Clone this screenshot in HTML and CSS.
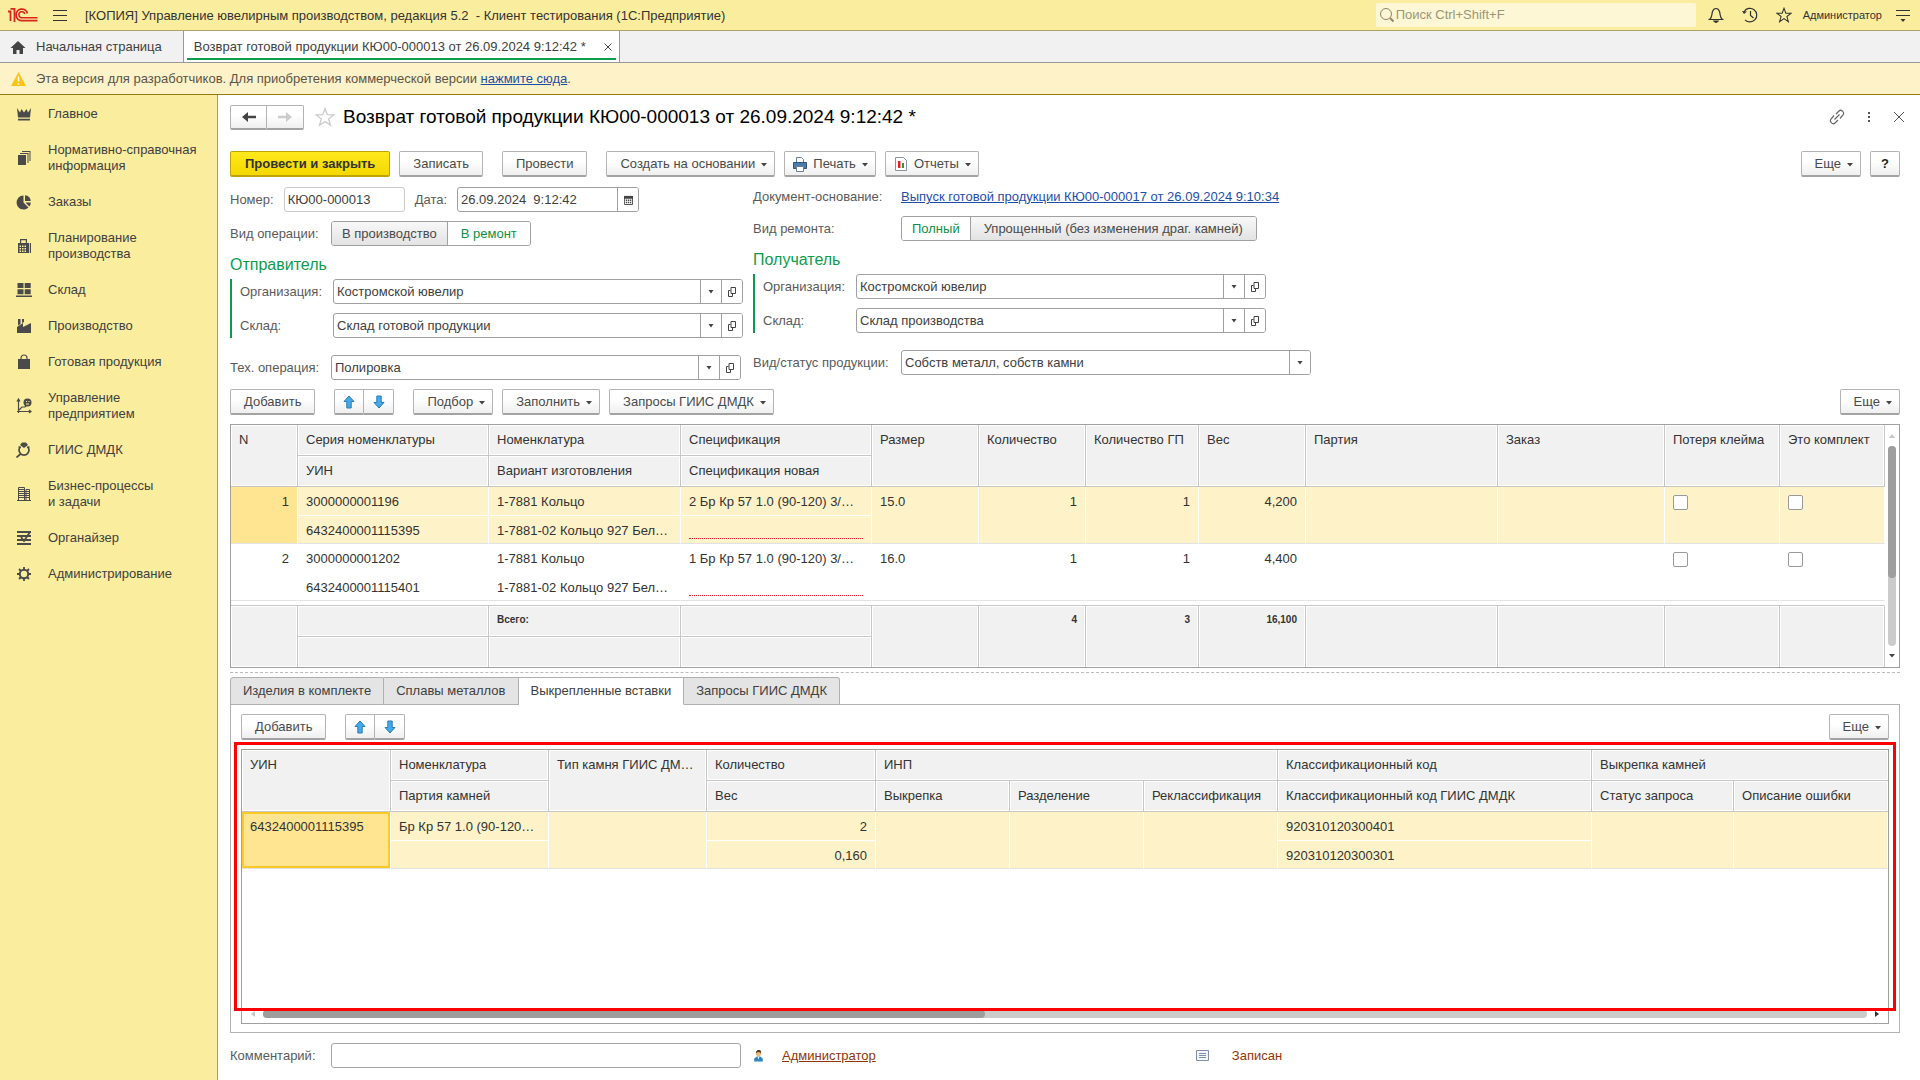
FILE: index.html
```html
<!DOCTYPE html>
<html lang="ru">
<head>
<meta charset="utf-8">
<meta name="viewport" content="width=device-width, initial-scale=1">
<title>Возврат готовой продукции КЮ00-000013</title>
<link rel="stylesheet" href="styles.css">
</head>
<body>
<svg class="sprite" aria-hidden="true">
  <symbol id="i-caret" viewBox="0 0 6 4"><path d="M0 0h6L3 3.500z" fill="#444"/></symbol>
  <symbol id="i-pick" viewBox="0 0 6 4"><path d="M.500 0h5L3 3.500z" fill="#444"/></symbol>
  <symbol id="i-open" viewBox="0 0 10 12"><path d="M4 1.500h4.500v6H4zM3.500 4.500h-2v6h4V8" fill="none" stroke="#444"/></symbol>
  <symbol id="i-up" viewBox="0 0 12 14"><path d="M6 1l5 5.500H8.200V13H3.800V6.500H1z" fill="#43aaec" stroke="#2a7cb5"/></symbol>
  <symbol id="i-down" viewBox="0 0 12 14"><path d="M6 13l5-5.500H8.200V1H3.800v6.500H1z" fill="#43aaec" stroke="#2a7cb5"/></symbol>
  <symbol id="i-star" viewBox="0 0 20 20"><path d="M10 1.500l2.300 6.200 6.400.200-5.100 4 1.900 6.400-5.500-3.700-5.500 3.700 1.900-6.400-5.100-4 6.400-.200z" fill="none" stroke="currentColor" stroke-width="1.300"/></symbol>
</svg>

<header class="topbar">
  <svg class="logo" width="30" height="16" viewBox="0 0 30 16" fill="none" stroke="#d9261c"><path d="M0 4.500h2.500V14M2.500 1.800h4V15" stroke-width="1.800"/><path d="M19.500 6.500A5.800 5.800 0 1 0 14 13.700h15.500" stroke-width="1.800"/><path d="M16.800 7A3 3 0 1 0 14 10.700h15.500" stroke-width="1.500"/></svg>
  <button class="bare" aria-label="Меню"><svg width="14" height="14" viewBox="0 0 14 14" stroke="#333"><path d="M0 2.500h14M0 7.500h14M0 12.500h14"/></svg></button>
  <span class="app-title">[КОПИЯ] Управление ювелирным производством, редакция 5.2 &nbsp;- Клиент тестирования (1С:Предприятие)</span>
  <label class="search"><svg width="16" height="16" viewBox="0 0 16 16" fill="none" stroke="#8d8868"><circle cx="7" cy="7" r="5.500"/><path d="M11 11l3.500 3.500" stroke-width="2"/></svg><input type="text" placeholder="Поиск Ctrl+Shift+F" aria-label="Поиск"></label>
  <div class="top-icons">
    <button class="bare" aria-label="Уведомления"><svg width="16" height="16" viewBox="0 0 16 16" fill="none" stroke="#333"><path d="M1.500 12.500c3-2 2-5 3-8C5 3 6 1.500 8 1.500S11 3 11.500 4.500c1 3 0 6 3 8z" stroke-width="1.200"/><path d="M5.500 14h5l-2 1.500h-1z" fill="#333"/></svg></button>
    <button class="bare" aria-label="История"><svg width="16" height="16" viewBox="0 0 16 16" fill="none" stroke="#333" stroke-width="1.200"><path d="M2.200 4.500A6.800 6.800 0 1 1 3 12.800M8.500 4v4.500l3 2.500"/><path d="M0 4l5 .500L2 7z" fill="#333" stroke="none"/></svg></button>
    <button class="bare" aria-label="Избранное"><svg width="16" height="16"><use href="#i-star"/></svg></button>
  </div>
  <button class="bare user">Администратор</button>
  <button class="bare" aria-label="Сервис"><svg width="14" height="14" viewBox="0 0 14 14" stroke="#333"><path d="M0 2.500h14M0 7.500h14" stroke-width="1.200"/><path d="M4.500 11h5L7 14z" fill="#333" stroke="none"/></svg></button>
</header>

<nav class="tabs" aria-label="Открытые окна">
  <a class="tab home" href="#home"><svg width="16" height="14" viewBox="0 0 16 14"><path d="M8 1l7.500 7H13v6H9.500v-4h-3v4H3V8H.500z" fill="#444"/></svg>Начальная страница</a>
  <div class="tab active"><a href="#doc">Возврат готовой продукции КЮ00-000013 от 26.09.2024 9:12:42 *</a><button class="bare" aria-label="Закрыть вкладку"><svg width="8" height="8" viewBox="0 0 8 8" stroke="#444"><path d="M.500.500l7 7M7.500.500l-7 7"/></svg></button></div>
</nav>

<div class="notice">
  <svg width="15" height="14" viewBox="0 0 15 14"><path d="M7.500 0L15 14H0z" fill="#fcc314"/><path d="M7.500 4.500v5M7.500 11v1.500" stroke="#fff" stroke-width="1.600"/></svg>
  <span>Эта версия для разработчиков. Для приобретения коммерческой версии <a href="#buy">нажмите сюда</a>.</span>
</div>

<div class="body">
<nav class="sidebar" aria-label="Разделы">
  <a href="#1"><svg width="16" height="16" viewBox="0 0 16 16"><path d="M1 2l3 4.500L5.500 3 8 6.500 10.500 3 12 6.500 15 2l-1 9.500H2zM2 12.700h12v1.800H2z"/></svg>Главное</a>
  <a href="#2"><svg width="16" height="16" viewBox="0 0 16 16"><path d="M2 5h8v10H2zM4 3h8.500v10h-1V4H4zM6 1h8.500v10h-1V2H6z"/></svg>Нормативно-справочная информация</a>
  <a href="#3"><svg width="16" height="16" viewBox="0 0 16 16"><path d="M7.500 1.500v7l5 5A7 7 0 1 1 7.500 1.500z"/><path d="M9 1.200A6.500 6.500 0 0 1 14.800 7H9zM9.500 8.500h5.300a6 6 0 0 1-1.500 4z"/></svg>Заказы</a>
  <a href="#4"><svg width="16" height="16" viewBox="0 0 16 16"><path fill-rule="evenodd" d="M4 1h7v4h2v10H2V5h2zM5.200 2.200V5h4.600V2.200zM3.500 7.500v1.500h1.500V7.500zm2.500 0v1.500h1.500V7.500zm2.500 0v1.500H10V7.500zM3.500 10v1.500h1.500V10zM6 10v1.500h1.500V10zm2.500 0v1.500H10V10zm-5 2.500V14h1.500v-1.500zm2.500 0V14h1.500v-1.500zm2.500 0V14H10v-1.500zM13.800 5H15v10h-1.200z"/></svg>Планирование производства</a>
  <a href="#5"><svg width="16" height="16" viewBox="0 0 16 16"><path d="M1.500 1h6v5h-6zM8.700 1h6v5h-6zM1.500 7.200h6v5h-6zM8.700 7.200h6v5h-6zM0 13.500h16V15H0z"/></svg>Склад</a>
  <a href="#6"><svg width="16" height="16" viewBox="0 0 16 16"><path d="M1 15V9l6-4v4l8-4v10zM2 1h2.500v5L2 7.500zM6 1h2v3L6 5z"/></svg>Производство</a>
  <a href="#7"><svg width="16" height="16" viewBox="0 0 16 16"><path d="M2 5h12v10H2z"/><path d="M5 7V4a3 3 0 0 1 6 0v3" fill="none" stroke="#4a4a4a" stroke-width="1.200"/></svg>Готовая продукция</a>
  <a href="#8"><svg width="16" height="16" viewBox="0 0 16 16"><path d="M2.500 1v14M1 13.500h14M1 3.500L2.500 1 4 3.500M13 12l2 1.500L13 15M3 12l3-3h3l2-2" fill="none" stroke="#4a4a4a" stroke-width="1.200"/><circle cx="11.500" cy="4.500" r="4"/><path d="M10 3.500h1M12.500 3.500h1M10 6h3" stroke="#fbed9e"/></svg>Управление предприятием</a>
  <a href="#9"><svg width="16" height="16" viewBox="0 0 16 16"><path d="M6 .500h4L12 3 8 6 4 3z"/><path d="M4.500 4.500a5 5 0 1 0 7 0M2.500 5l2.500.500M13.500 5l-2.500.500M4.500 12L.500 15.500" fill="none" stroke="#4a4a4a" stroke-width="1.700"/></svg>ГИИС ДМДК</a>
  <a href="#10"><svg width="16" height="16" viewBox="0 0 16 16"><path d="M2.500 1.500h6v13h-6zM10 3.500h3.500v11H10zM2.500 3.500h6M2.500 5.500h11M2.500 7.500h11M2.500 9.500h11M2.500 11.500h11M1 14.500h14" fill="none" stroke="#4a4a4a"/></svg>Бизнес-процессы<br>и задачи</a>
  <a href="#11"><svg width="16" height="16" viewBox="0 0 16 16"><path d="M1 2h14M1 6h14M1 10h14M1 14h14M5 7l3 4 6-9" fill="none" stroke="#4a4a4a" stroke-width="1.800"/></svg>Органайзер</a>
  <a href="#12"><svg width="16" height="16" viewBox="0 0 16 16"><g fill="none" stroke="#4a4a4a"><circle cx="8" cy="8" r="4.200" stroke-width="2"/><path d="M8 1v2.500M8 12.500V15M1 8h2.500M12.500 8H15M3 3l2 2M11 11l2 2M13 3l-2 2M5 11l-2 2" stroke-width="1.800"/></g></svg>Администрирование</a>
</nav>

<main class="main">
  <div class="title-row">
    <div class="joined"><button class="btn nav" aria-label="Назад"><svg width="14" height="12" viewBox="0 0 14 12"><path d="M0 6l6-5v3.700h8v2.600H6V11z" fill="#444"/></svg></button><button class="btn nav" aria-label="Вперед"><svg width="14" height="12" viewBox="0 0 14 12"><path d="M14 6L8 1v3.700H0v2.600h8V11z" fill="#ccc"/></svg></button></div>
    <button class="bare fav" aria-label="В избранное"><svg width="20" height="20"><use href="#i-star"/></svg></button>
    <h1>Возврат готовой продукции КЮ00-000013 от 26.09.2024 9:12:42 *</h1>
    <div class="win-icons">
      <button class="bare" aria-label="Ссылка"><svg width="16" height="16" viewBox="0 0 16 16" fill="none" stroke="#666" stroke-width="1.200"><path d="M7 5l3-3c2-2 6 1 4 4l-3 3.500M9 11l-3 3c-2 2-6-1-4-4l3-3.500M5.500 10.500l5-5"/></svg></button>
      <button class="bare" aria-label="Действия"><svg width="4" height="16" viewBox="0 0 4 16" fill="#555"><path d="M1 3h2v2H1zM1 7h2v2H1zM1 11h2v2H1z"/></svg></button>
      <button class="bare" aria-label="Закрыть"><svg width="12" height="12" viewBox="0 0 12 12" stroke="#555"><path d="M1 1l10 10M11 1L1 11"/></svg></button>
    </div>
  </div>

  <div class="commands">
    <button class="btn primary">Провести и закрыть</button>
    <button class="btn">Записать</button>
    <button class="btn apart">Провести</button>
    <button class="btn apart menu">Создать на основании<svg width="6" height="4"><use href="#i-caret"/></svg></button>
    <button class="btn menu pic"><svg width="14" height="16" viewBox="0 0 14 16"><path d="M3.500 7V1.500h5l2 2V7" fill="#fff" stroke="#6b7f93"/><path d="M.500 6.500h13v6H.500z" fill="#4d7ba8" stroke="#2f567d"/><path d="M3.500 10.500h7v5h-7z" fill="#fff" stroke="#6b7f93"/></svg>Печать<svg width="6" height="4"><use href="#i-caret"/></svg></button>
    <button class="btn menu pic"><svg width="14" height="16" viewBox="0 0 14 16"><path d="M1.500 1.500h8l3 3v10h-11z" fill="#fff" stroke="#8a93a0"/><path d="M4 5h2.500v7H4z" fill="#e22"/><path d="M8 7h2v5H8z" fill="#2a9a3a"/></svg>Отчеты<svg width="6" height="4"><use href="#i-caret"/></svg></button>
    <button class="btn menu push">Еще<svg width="6" height="4"><use href="#i-caret"/></svg></button>
    <button class="btn help">?</button>
  </div>

  <div class="form">
    <div class="form-col left">
      <div class="row">
        <label for="num">Номер:</label><input class="box number" id="num" value="КЮ00-000013" readonly>
        <label class="date-label" for="date">Дата:</label><div class="field date"><input id="date" value="26.09.2024  9:12:42"><button aria-label="Календарь"><svg width="9" height="10" viewBox="0 0 10 11"><path d="M.500 1.500h9v9h-9z" fill="none" stroke="#444"/><path d="M0 1h10v3H0zM2 5h1.500v1.500H2zM4.300 5h1.500v1.500H4.300zM6.600 5h1.500v1.500H6.600zM2 7.500h1.500V9H2zM4.300 7.500h1.500V9H4.300zM6.600 7.500h1.500V9H6.600z" fill="#444"/></svg></button></div>
      </div>
      <div class="row"><span class="lbl">Вид операции:</span><div class="toggle"><button>В производство</button><button class="on" aria-pressed="true">В ремонт</button></div></div>
      <h2>Отправитель</h2>
      <div class="group">
        <div class="row"><label for="o1">Организация:</label><div class="field"><input id="o1" value="Костромской ювелир"><button aria-label="Выбрать"><svg width="6" height="4"><use href="#i-pick"/></svg></button><button aria-label="Открыть"><svg width="10" height="12"><use href="#i-open"/></svg></button></div></div>
        <div class="row"><label for="s1">Склад:</label><div class="field"><input id="s1" value="Склад готовой продукции"><button aria-label="Выбрать"><svg width="6" height="4"><use href="#i-pick"/></svg></button><button aria-label="Открыть"><svg width="10" height="12"><use href="#i-open"/></svg></button></div></div>
      </div>
      <div class="row last"><label class="lbl" for="tech">Тех. операция:</label><div class="field"><input id="tech" value="Полировка"><button aria-label="Выбрать"><svg width="6" height="4"><use href="#i-pick"/></svg></button><button aria-label="Открыть"><svg width="10" height="12"><use href="#i-open"/></svg></button></div></div>
    </div>
    <div class="form-col right">
      <div class="row short"><span class="lbl">Документ-основание:</span><a href="#base">Выпуск готовой продукции КЮ00-000017 от 26.09.2024 9:10:34</a></div>
      <div class="row"><span class="lbl">Вид ремонта:</span><div class="toggle"><button class="on" aria-pressed="true">Полный</button><button>Упрощенный (без изменения драг. камней)</button></div></div>
      <h2>Получатель</h2>
      <div class="group">
        <div class="row"><label for="o2">Организация:</label><div class="field"><input id="o2" value="Костромской ювелир"><button aria-label="Выбрать"><svg width="6" height="4"><use href="#i-pick"/></svg></button><button aria-label="Открыть"><svg width="10" height="12"><use href="#i-open"/></svg></button></div></div>
        <div class="row"><label for="s2">Склад:</label><div class="field"><input id="s2" value="Склад производства"><button aria-label="Выбрать"><svg width="6" height="4"><use href="#i-pick"/></svg></button><button aria-label="Открыть"><svg width="10" height="12"><use href="#i-open"/></svg></button></div></div>
      </div>
      <div class="row last"><label class="lbl" for="kind">Вид/статус продукции:</label><div class="field"><select id="kind"><option>Собств металл, собств камни</option></select><span class="drop"><svg width="6" height="4"><use href="#i-pick"/></svg></span></div></div>
    </div>
  </div>

  <div class="commands">
    <button class="btn">Добавить</button>
    <div class="joined apart"><button class="btn arrow" aria-label="Вверх"><svg width="12" height="14"><use href="#i-up"/></svg></button><button class="btn arrow" aria-label="Вниз"><svg width="12" height="14"><use href="#i-down"/></svg></button></div>
    <button class="btn apart menu">Подбор<svg width="6" height="4"><use href="#i-caret"/></svg></button>
    <button class="btn menu">Заполнить<svg width="6" height="4"><use href="#i-caret"/></svg></button>
    <button class="btn menu">Запросы ГИИС ДМДК<svg width="6" height="4"><use href="#i-caret"/></svg></button>
    <button class="btn menu push">Еще<svg width="6" height="4"><use href="#i-caret"/></svg></button>
  </div>

  <div class="grid items">
    <table>
      <colgroup><col class="w67"><col class="w191"><col class="w192"><col class="w191"><col class="w107"><col class="w107"><col class="w113"><col class="w107"><col><col class="w167"><col class="w115"><col class="w105"></colgroup>
      <thead>
        <tr><th rowspan="2">N</th><th>Серия номенклатуры</th><th>Номенклатура</th><th>Спецификация</th><th rowspan="2">Размер</th><th rowspan="2">Количество</th><th rowspan="2">Количество ГП</th><th rowspan="2">Вес</th><th rowspan="2">Партия</th><th rowspan="2">Заказ</th><th rowspan="2">Потеря клейма</th><th rowspan="2">Это комплект</th></tr>
        <tr><th>УИН</th><th>Вариант изготовления</th><th>Спецификация новая</th></tr>
      </thead>
      <tbody>
        <tr class="sel"><td rowspan="2" class="num cur end">1</td><td>3000000001196</td><td>1-7881 Кольцо</td><td>2 Бр Кр 57 1.0 (90-120) 3/…</td><td rowspan="2" class="end">15.0</td><td rowspan="2" class="num end">1</td><td rowspan="2" class="num end">1</td><td rowspan="2" class="num end">4,200</td><td rowspan="2" class="end"></td><td rowspan="2" class="end"></td><td rowspan="2" class="end"><input type="checkbox" aria-label="Потеря клейма, строка 1"></td><td rowspan="2" class="end"><input type="checkbox" aria-label="Это комплект, строка 1"></td></tr>
        <tr class="sel second"><td>6432400001115395</td><td>1-7881-02 Кольцо 927 Бел…</td><td><span class="required"></span></td></tr>
        <tr><td rowspan="2" class="num end">2</td><td>3000000001202</td><td>1-7881 Кольцо</td><td>1 Бр Кр 57 1.0 (90-120) 3/…</td><td rowspan="2" class="end">16.0</td><td rowspan="2" class="num end">1</td><td rowspan="2" class="num end">1</td><td rowspan="2" class="num end">4,400</td><td rowspan="2" class="end"></td><td rowspan="2" class="end"></td><td rowspan="2" class="end"><input type="checkbox" aria-label="Потеря клейма, строка 2"></td><td rowspan="2" class="end"><input type="checkbox" aria-label="Это комплект, строка 2"></td></tr>
        <tr class="second"><td>6432400001115401</td><td>1-7881-02 Кольцо 927 Бел…</td><td><span class="required"></span></td></tr>
      </tbody>
      <tbody class="gap"><tr><td colspan="12"></td></tr></tbody>
      <tfoot>
        <tr><td rowspan="2"></td><td></td><td>Всего:</td><td></td><td rowspan="2"></td><td rowspan="2" class="num">4</td><td rowspan="2" class="num">3</td><td rowspan="2" class="num">16,100</td><td rowspan="2"></td><td rowspan="2"></td><td rowspan="2"></td><td rowspan="2"></td></tr>
        <tr><td></td><td></td><td></td></tr>
      </tfoot>
    </table>
    <div class="vscroll"><svg width="6" height="4" viewBox="0 0 6 4"><path d="M0 4h6L3 0z" fill="#c4c4c4"/></svg><div class="track"><div class="thumb"></div></div><svg width="6" height="4"><use href="#i-caret"/></svg></div>
  </div>

  <div class="splitter"></div>

  <div class="subtabs" role="tablist">
    <button role="tab">Изделия в комплекте</button><button role="tab">Сплавы металлов</button><button role="tab" class="on" aria-selected="true">Выкрепленные вставки</button><button role="tab">Запросы ГИИС ДМДК</button>
  </div>
  <section class="panel">
    <div class="commands">
      <button class="btn">Добавить</button>
      <div class="joined apart"><button class="btn arrow" aria-label="Вверх"><svg width="12" height="14"><use href="#i-up"/></svg></button><button class="btn arrow" aria-label="Вниз"><svg width="12" height="14"><use href="#i-down"/></svg></button></div>
      <button class="btn menu push">Еще<svg width="6" height="4"><use href="#i-caret"/></svg></button>
    </div>
    <div class="grid stones">
      <table>
        <colgroup><col class="w149"><col class="w158"><col class="w158"><col class="w169"><col class="w134"><col class="w134"><col class="w134"><col class="w314"><col class="w142"><col></colgroup>
        <thead>
          <tr><th rowspan="2">УИН</th><th>Номенклатура</th><th rowspan="2">Тип камня ГИИС ДМ…</th><th>Количество</th><th colspan="3">ИНП</th><th>Классификационный код</th><th colspan="2">Выкрепка камней</th></tr>
          <tr><th>Партия камней</th><th>Вес</th><th>Выкрепка</th><th>Разделение</th><th>Реклассификация</th><th>Классификационный код ГИИС ДМДК</th><th>Статус запроса</th><th>Описание ошибки</th></tr>
        </thead>
        <tbody>
          <tr class="sel"><td rowspan="2" class="cur focus end">6432400001115395</td><td>Бр Кр 57 1.0 (90-120…</td><td rowspan="2" class="end"></td><td class="num">2</td><td rowspan="2" class="end"></td><td rowspan="2" class="end"></td><td rowspan="2" class="end"></td><td>920310120300401</td><td rowspan="2" class="end"></td><td rowspan="2" class="end"></td></tr>
          <tr class="sel second"><td></td><td class="num">0,160</td><td>920310120300301</td></tr>
        </tbody>
      </table>
      <div class="hscroll"><svg width="4" height="6" viewBox="0 0 4 6"><path d="M4 0v6L0 3z" fill="#c4c4c4"/></svg><div class="track"><div class="thumb"></div></div><svg width="4" height="6" viewBox="0 0 4 6"><path d="M0 0v6l4-3z" fill="#333"/></svg></div>
      <div class="callout"></div>
    </div>
  </section>

  <div class="status">
    <label class="lbl" for="comment">Комментарий:</label><input class="box comment" id="comment">
    <svg width="9" height="12" viewBox="0 0 10 14"><path d="M0 13.500V10l3-2.500h4L10 10v3.500z" fill="#2f86c0"/><circle cx="5" cy="4" r="3" fill="#f2b876"/><path d="M2 4V2l2-2h3l1 2v2L6.500 2.500h-3z" fill="#5a4020"/><path d="M4 8h2l-1 3z" fill="#fff"/></svg>
    <a class="author" href="#author">Администратор</a>
    <svg class="doc" width="13" height="11" viewBox="0 0 13 11"><path d="M.500.500h12v10H.500z" fill="#f4f7fa" stroke="#8090a8"/><path d="M3 3.500h7M3 5.500h7M3 7.500h7" stroke="#8090a8"/></svg>
    <span class="state">Записан</span>
  </div>
</main>
</div>
</body>
</html>
```
FILE: styles.css
```css
* { box-sizing: border-box; }
body {
  margin: 0;
  min-height: 100vh;
  display: flex;
  flex-direction: column;
  background: #fff;
  color: #404040;
  font: 13px/16px "Liberation Sans", Arial, sans-serif;
}
button, input, select { font: inherit; color: inherit; margin: 0; }
button { cursor: pointer; white-space: nowrap; }
svg { display: block; flex: none; }
a { color: #1d4fa8; }
.sprite { position: absolute; width: 0; height: 0; }
.bare { border: 0; background: none; padding: 0; }

/* window header */
.topbar {
  display: flex;
  align-items: center;
  height: 31px;
  padding: 0 10px 0 8px;
  background: #fbed9e;
  border-bottom: 1px solid #aca36a;
  color: #333;
}
.logo { margin-right: 15px; }
.app-title { margin-left: 18px; padding-top: 1px; white-space: nowrap; }
.search {
  display: flex;
  align-items: center;
  width: 320px;
  height: 24px;
  margin-left: auto;
  padding: 0 3px;
  background: #fdf7d6;
  border-radius: 2px;
}
.search input { flex: 1; min-width: 0; padding: 0 0 1px 1px; border: 0; background: none; outline: 0; }
.search input::placeholder { color: #9a9678; opacity: 1; }
.top-icons { display: flex; gap: 18px; margin: 0 11px 0 12px; }
.user { margin-right: 14px; font-size: 11px; color: #333; }

.tabs { display: flex; height: 32px; background: #f1f1f1; border-bottom: 1px solid #999; }
.tab { display: flex; align-items: center; color: #404040; text-decoration: none; border-right: 1px solid #999; white-space: nowrap; }
.tab a { color: inherit; text-decoration: none; }
.home { gap: 10px; padding: 0 21px 0 10px; }
.active { position: relative; gap: 18px; padding: 0 7px 0 10px; background: #fff; }
.active::after { content: ""; position: absolute; left: 3px; right: 3px; bottom: 2px; height: 2px; background: #0d9b4e; }

.notice { display: flex; align-items: center; gap: 10px; height: 32px; padding: 0 11px; background: #fef2c8; border-bottom: 1px solid #967b12; color: #5a5548; }

.body { flex: 1; display: flex; }

.sidebar { width: 218px; flex: none; padding-top: 1px; background: #fbed9e; border-right: 1px solid #a09c78; }
.sidebar a { display: flex; align-items: center; gap: 16px; padding: 10px 12px 10px 16px; color: #404040; text-decoration: none; }
.sidebar svg { fill: #4a4a4a; }

.main { flex: 1; min-width: 0; display: flex; flex-direction: column; padding: 10px 20px 12px 12px; }

.title-row { display: flex; align-items: center; height: 24px; margin-bottom: 22px; }
.fav { margin: 0 8px 0 11px; color: #ccc; }
h1 { margin: 0; font-size: 19px; line-height: 24px; font-weight: 400; color: #000; }
.win-icons { display: flex; align-items: center; gap: 22px; margin: 0 -5px 0 auto; }

/* command bars */
.commands { display: flex; gap: 9px; }
.btn {
  display: flex;
  align-items: center;
  justify-content: center;
  height: 26px;
  padding: 1px 13px 0;
  border: 1px solid #b3b3b3;
  border-bottom: 2px solid #a3a3a3;
  border-radius: 2px;
  background: linear-gradient(#fff 40%, #efefef);
  color: #4a4a4a;
}
.primary { padding: 1px 14px 0; background: linear-gradient(#ffe81c, #f5d800); border-color: #bfa50a; color: #333; font-weight: 700; }
.menu { gap: 6px; padding: 1px 7px 0 13px; }
.menu svg:last-child { position: relative; top: 1px; }
.pic { padding-left: 8px; }
.apart { margin-left: 10px; }
.push { margin-left: auto; }
.help { width: 30px; padding: 1px 0 0; font-weight: 700; color: #222; }
.joined { display: flex; }
.joined .btn:first-child { border-radius: 2px 0 0 2px; }
.joined .btn:last-child { border-left: 0; border-radius: 0 2px 2px 0; }
.nav { width: 37px; height: 25px; padding: 0; }
.arrow { width: 30px; padding: 0; }

/* document header form */
.form { display: flex; margin: 10px 0 9px; color: #5a5a5a; }
.form-col { display: flex; flex-direction: column; gap: 9px; }
.left { width: 523px; flex: none; }
.right { flex: 1; }
.row { display: flex; align-items: center; height: 25px; }
.short { height: 20px; }
.row.last { margin-top: 8px; }
.left .lbl { width: 101px; }
.right .lbl { width: 148px; }
.box { height: 25px; padding: 0 3px; border: 1px solid #a6a6a6; border-radius: 3px; background: #fff; color: #404040; }
.number { width: 121px; margin-left: 10px; border-color: #ccc; }
.date-label { margin: 0 10px 0 10px; }
.field { position: relative; display: flex; width: 410px; height: 25px; border: 1px solid #a0a0a0; border-radius: 3px; background: #fff; overflow: hidden; }
.field input, .field select { flex: 1; min-width: 0; padding: 0 3px; border: 0; background: none; outline: 0; color: #404040; white-space: pre; }
.field select { appearance: none; }
.field button, .drop { display: flex; align-items: center; justify-content: center; width: 21px; padding: 0; border: 0; border-left: 1px solid #a0a0a0; background: #fff; }
.drop { position: absolute; right: 0; top: 0; bottom: 0; pointer-events: none; }
.date { width: 182px; }
h2 { margin: 0 0 -5px; font-size: 16px; line-height: 20px; font-weight: 400; color: #0d9b4e; }
.group { display: flex; flex-direction: column; gap: 9px; padding-left: 8px; border-left: 2px solid #0d9b4e; }
.group label { width: 93px; }
.toggle { display: flex; height: 25px; border: 1px solid #a0a0a0; border-radius: 3px; overflow: hidden; }
.toggle button { padding: 0 10px; border: 0; background: linear-gradient(#f8f8f8, #e3e3e3); color: #4a4a4a; }
.toggle button + button { border-left: 1px solid #a0a0a0; padding: 0 13px; }
.toggle .on, .toggle button + .on { background: #fff; color: #0d8f47; }

/* data grids */
.grid { position: relative; display: flex; border: 1px solid #a0a0a0; background: #fff; color: #333; }
.items { margin-top: 9px; }
table { width: 100%; table-layout: fixed; border-collapse: separate; border-spacing: 0; }
th, td { height: 31px; padding: 7px 8px 0; text-align: left; vertical-align: top; font-weight: 400; white-space: nowrap; overflow: hidden; }
th, tfoot td { background: #f1f1f1; border-right: 1px solid #c6c6c6; border-bottom: 1px solid #c6c6c6; box-shadow: inset 0 0 0 1px #fff; }
tbody td { height: 29px; border-right: 1px solid #fff; border-bottom: 1px solid #fff; }
tbody .second td { height: 28px; }
tbody .second td, tbody .end { border-bottom-color: #e2e2e2; }
.sel td { background: #fef2c8; }
.sel .cur { background: #ffe591; }
.sel .focus { box-shadow: inset 0 0 0 2px #fbc926; }
.gap td { height: 5px; padding: 0; border-bottom-color: #c6c6c6; }
tfoot td { padding-top: 6px; font-size: 10px; font-weight: 700; }
tfoot tr:last-child td { height: 30px; }
tfoot tr:last-child td, tfoot td[rowspan] { border-bottom: 0; }
.num { text-align: right; }
.required { display: block; height: 16px; border-bottom: 1px dotted #e02020; }
td input[type="checkbox"] { display: block; width: 15px; height: 15px; margin: 1px 0 0; appearance: none; border: 1px solid #999; border-radius: 2px; background: #fff; }
.w67 { width: 67px; } .w105 { width: 105px; } .w107 { width: 107px; } .w113 { width: 113px; }
.w115 { width: 115px; } .w134 { width: 134px; } .w142 { width: 142px; } .w149 { width: 149px; }
.w158 { width: 158px; } .w167 { width: 167px; } .w169 { width: 169px; } .w191 { width: 191px; }
.w192 { width: 192px; } .w314 { width: 314px; }

.track { flex: 1; background: #cbcbcb; border-radius: 4px; }
.thumb { background: #9e9e9e; border-radius: 4px; }
.vscroll { display: flex; flex-direction: column; align-items: center; gap: 8px; width: 14px; flex: none; padding: 9px 0; }
.vscroll .track { width: 8px; }
.vscroll .thumb { height: 66%; }
.hscroll { display: flex; align-items: center; gap: 8px; margin-top: auto; padding: 0 9px 5px; }
.hscroll .track { height: 8px; }
.hscroll .thumb { width: 45%; height: 8px; }

.splitter { margin: 4px 0; border-top: 1px dashed #bbb; }

.subtabs { display: flex; position: relative; z-index: 1; margin-bottom: -1px; }
.subtabs button { height: 28px; padding: 0 12px; border: 1px solid #b0b0b0; border-left-width: 0; background: #e4e4e4; color: #404040; }
.subtabs button:first-child { border-left-width: 1px; border-radius: 3px 0 0 0; }
.subtabs button:last-child { border-radius: 0 3px 0 0; }
.subtabs .on { background: #fff; border-bottom-color: #fff; }
.panel { flex: 1; display: flex; flex-direction: column; padding: 9px 10px 8px; border: 1px solid #b3b3b3; }
.stones { flex: 1; flex-direction: column; min-height: 200px; margin-top: 9px; }
.stones thead tr th:last-child { border-right: 0; }
.callout { position: absolute; inset: -8px -8px 12px; border: 3px solid #f00; pointer-events: none; }

.status { display: flex; align-items: center; height: 25px; margin-top: 10px; color: #5a5a5a; }
.status .lbl { width: 101px; }
.comment { width: 410px; margin-right: 13px; }
.author { margin-left: 19px; color: #8f3608; }
.doc { margin-left: 320px; }
.state { margin-left: 23px; color: #8f3608; }
```
